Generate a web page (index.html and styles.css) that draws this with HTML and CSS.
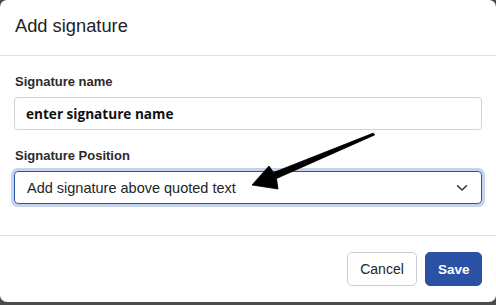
FILE: index.html
```html
<!DOCTYPE html>
<html>
<head>
<meta charset="utf-8">
<link rel="stylesheet" href="styles.css">
</head>
<body>
<div class="modal">
  <div class="modal-header">
    <h1 class="title">Add signature</h1>
  </div>
  <div class="modal-body">
    <label class="field-label">Signature name</label>
    <div class="text-input">enter signature name</div>
    <label class="field-label second">Signature Position</label>
    <div class="select focused">
      <span class="select-text">Add signature above quoted text</span>
      <svg class="chevron" width="12" height="8" viewBox="0 0 12 8"><path d="M1.5 1.8 L6 6 L10.5 1.8" fill="none" stroke="#333" stroke-width="1.5" stroke-linecap="round" stroke-linejoin="round"/></svg>
    </div>
  </div>
  <div class="modal-footer">
    <button class="btn btn-cancel">Cancel</button>
    <button class="btn btn-save">Save</button>
  </div>
  <svg class="annotation" width="496" height="305" viewBox="0 0 496 305">
    <polygon points="252,185 269,166 273.5,172.5 373.3,133.1 374.7,134.9 276.5,178.5 278,189" fill="#000" stroke="#000" stroke-width="0.8" stroke-linejoin="round"/>
  </svg>
</div>
</body>
</html>
```

FILE: styles.css
```css
* { box-sizing: border-box; }
html, body {
  margin: 0;
  padding: 0;
  background: #4b4b4b;
  width: 496px;
  height: 305px;
  overflow: hidden;
}
.modal {
  position: relative;
  width: 496px;
  height: 302px;
  background: #fff;
  border-radius: 7px;
  font-family: "Liberation Sans", Arial, sans-serif;
  color: #212529;
  display: flex;
  flex-direction: column;
}
.modal-header {
  height: 56px;
  padding: 15px 15px 0;
  border-bottom: 1px solid #dee2e6;
}
.title {
  margin: 0;
  font-size: 18.3px;
  line-height: 22px;
  font-weight: normal;
  color: #1e1e1e;
}
.modal-body {
  padding: 18px 14px 31px;
  display: flex;
  flex-direction: column;
}
.field-label {
  font-size: 13px;
  line-height: 16px;
  font-weight: bold;
  color: #2b2b2b;
  padding-left: 1px;
  margin-bottom: 7px;
}
.field-label.second {
  margin-top: 18px;
}
.text-input {
  height: 33px;
  border: 1px solid #ced4da;
  border-radius: 4px;
  padding: 0 11px;
  display: flex;
  align-items: center;
  font-family: "Open Sans", sans-serif;
  font-weight: 700;
  font-size: 13.6px;
  color: #111;
}
.select {
  height: 33px;
  border: 1px solid #2c55a8;
  border-radius: 4px;
  padding: 0 13px 0 12px;
  display: flex;
  align-items: center;
  justify-content: space-between;
  font-size: 14.5px;
  color: #212529;
}
.select.focused {
  box-shadow: 0 0 0 3px #c6d3ec;
}
.chevron {
  display: block;
  margin-top: 1px;
}
.modal-footer {
  border-top: 1px solid #dee2e6;
  flex: 1;
  display: flex;
  justify-content: flex-end;
  align-items: flex-start;
  gap: 8px;
  padding: 16px 14px 0;
}
.btn {
  height: 34px;
  border-radius: 5px;
  font-family: "Liberation Sans", Arial, sans-serif;
  font-size: 14px;
  padding: 0 12px;
  cursor: pointer;
}
.btn-cancel {
  width: 70px;
  background: #fff;
  border: 1px solid #c9ced4;
  color: #212529;
}
.btn-save {
  width: 57px;
  background: #2b51a4;
  border: 1px solid #2b51a4;
  color: #fff;
  font-weight: bold;
  font-size: 13.5px;
}
.annotation {
  position: absolute;
  left: 0;
  top: 0;
  pointer-events: none;
}
```
